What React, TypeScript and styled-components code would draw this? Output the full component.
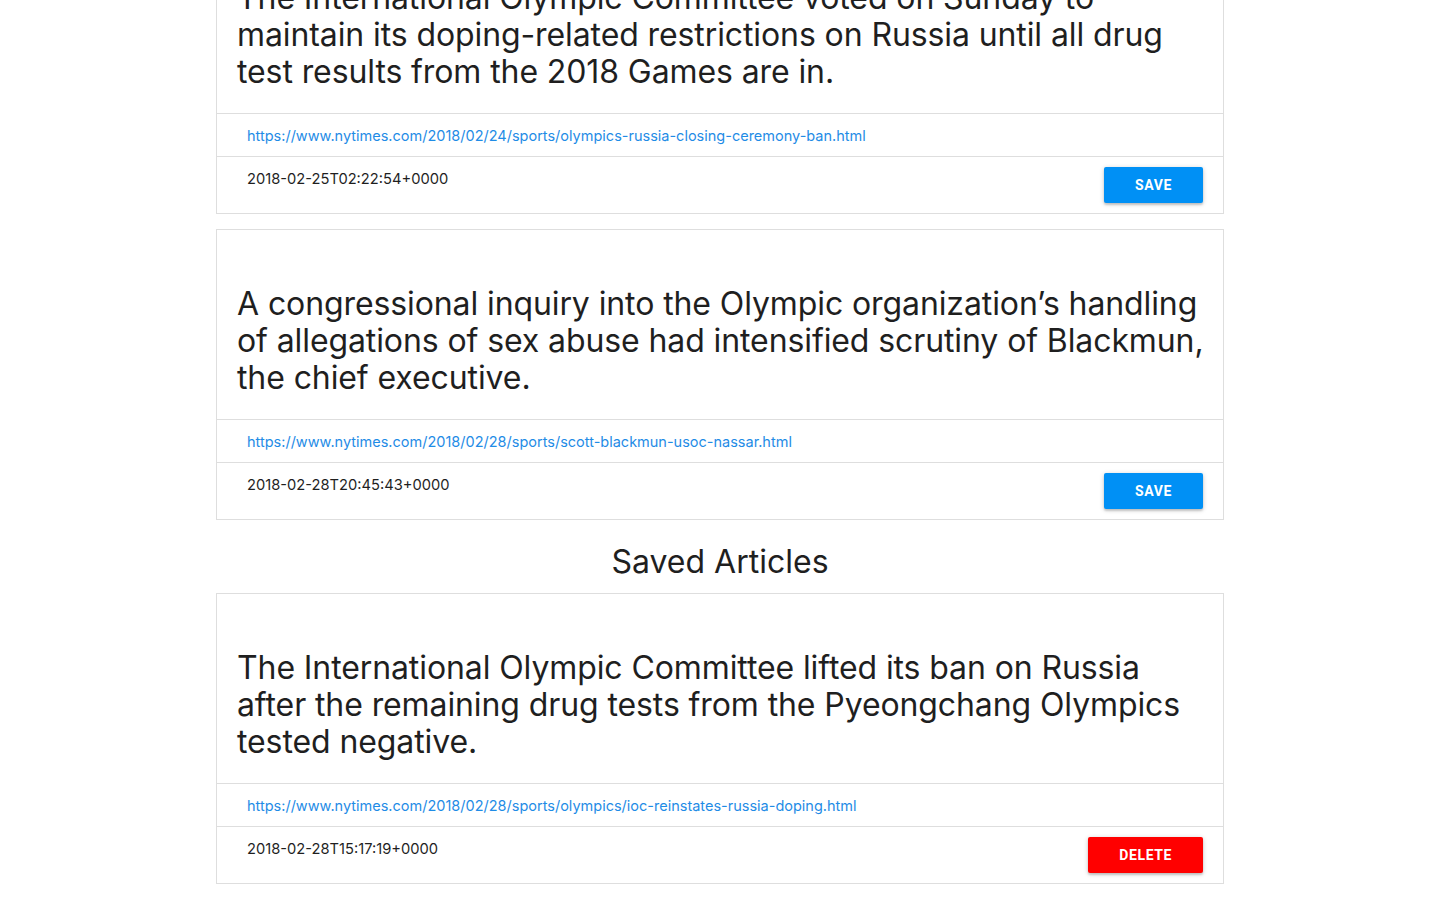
import React from "react";
import styled, { createGlobalStyle } from "styled-components";

const Global = createGlobalStyle`
  html, body { margin: 0; padding: 0; background: #fff; }
  body { font-family: Inter, "Noto Sans", Roboto, sans-serif; color: #212121; }
`;

const Page = styled.main`
  width: 1008px;
  margin: -77px auto 0;
`;

const Card = styled.article`
  border: 1px solid #dedede;
  margin-bottom: 15px;
  background: #fff;
`;

const TitleBlock = styled.div`
  padding: 55px 16px 23px 20px;
`;

const Title = styled.h3`
  margin: 0;
  font-size: 32px;
  line-height: 37px;
  font-weight: 400;
  color: #1f1f1f;
  letter-spacing: -0.1px;
`;

const LinkRow = styled.div`
  border-top: 1px solid #dedede;
  padding: 0 30px;
  height: 42px;
  display: flex;
  align-items: center;
`;

const Link = styled.a`
  font-size: 14.5px;
  color: #1f8ce6;
  text-decoration: none;
`;

const DateRow = styled.div`
  border-top: 1px solid #dedede;
  height: 57px;
  padding: 0 20px 0 30px;
  display: flex;
  justify-content: space-between;
  align-items: flex-start;
  box-sizing: border-box;
`;

const DateText = styled.span`
  font-size: 14.7px;
  line-height: 20px;
  padding-top: 12px;
  color: #1f1f1f;
`;

const Button = styled.button<{ $danger?: boolean }>`
  margin-top: 10px;
  height: 36px;
  min-width: 99px;
  padding: 0 31px;
  border: none;
  border-radius: 2px;
  background: ${(p) => (p.$danger ? "#ff0000" : "#0090f5")};
  color: #fff;
  font-family: Roboto, Inter, sans-serif;
  font-weight: 700;
  font-size: 14px;
  letter-spacing: 0.6px;
  text-transform: uppercase;
  box-shadow: 0 1px 5px rgba(0, 0, 0, 0.2), 0 2px 2px rgba(0, 0, 0, 0.14);
  cursor: pointer;
`;

const Heading = styled.h2`
  margin: 0;
  padding: 6px 0 10px;
  text-align: center;
  font-size: 32px;
  line-height: 42px;
  font-weight: 400;
  color: #1f1f1f;
`;

type Article = { title: string; url: string; date: string };

const articles: Article[] = [
  {
    title:
      "The International Olympic Committee voted on Sunday to maintain its doping-related restrictions on Russia until all drug test results from the 2018 Games are in.",
    url: "https://www.nytimes.com/2018/02/24/sports/olympics-russia-closing-ceremony-ban.html",
    date: "2018-02-25T02:22:54+0000",
  },
  {
    title:
      "A congressional inquiry into the Olympic organization\u2019s handling of allegations of sex abuse had intensified scrutiny of Blackmun, the chief executive.",
    url: "https://www.nytimes.com/2018/02/28/sports/scott-blackmun-usoc-nassar.html",
    date: "2018-02-28T20:45:43+0000",
  },
];

const saved: Article[] = [
  {
    title:
      "The International Olympic Committee lifted its ban on Russia after the remaining drug tests from the Pyeongchang Olympics tested negative.",
    url: "https://www.nytimes.com/2018/02/28/sports/olympics/ioc-reinstates-russia-doping.html",
    date: "2018-02-28T15:17:19+0000",
  },
];

const ArticleCard = ({ a, danger }: { a: Article; danger?: boolean }) => (
  <Card>
    <TitleBlock>
      <Title>{a.title}</Title>
    </TitleBlock>
    <LinkRow>
      <Link href={a.url}>{a.url}</Link>
    </LinkRow>
    <DateRow>
      <DateText>{a.date}</DateText>
      <Button $danger={danger}>{danger ? "Delete" : "Save"}</Button>
    </DateRow>
  </Card>
);

export default function App() {
  return (
    <>
      <Global />
      <Page>
        {articles.map((a) => (
          <ArticleCard key={a.url} a={a} />
        ))}
        <Heading>Saved Articles</Heading>
        {saved.map((a) => (
          <ArticleCard key={a.url} a={a} danger />
        ))}
      </Page>
    </>
  );
}
